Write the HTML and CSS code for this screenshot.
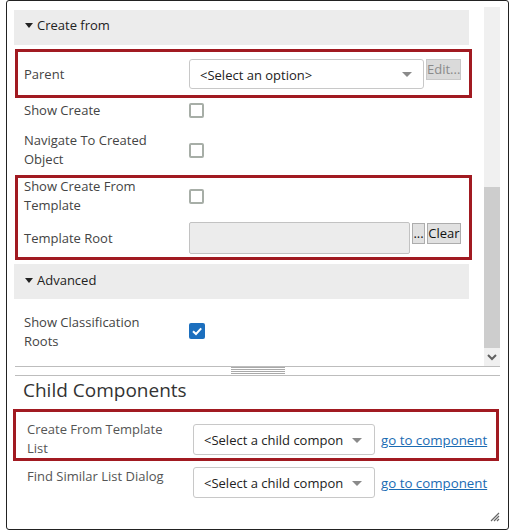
FILE: index.html
```html
<!DOCTYPE html>
<html>
<head>
<meta charset="utf-8">
<link rel="stylesheet" href="styles.css">
</head>
<body>
<div class="frame">
  <div class="upper">
    <div class="pane">
      <div class="band"><span class="caret"></span>Create from</div>
      <div class="row h-parent">
        <div class="label">Parent</div>
        <div class="ctrl">
          <div class="select sel-parent"><span class="seltext">&lt;Select an option&gt;</span><span class="arrow"></span></div>
          <button class="btn btn-edit">Edit...</button>
        </div>
      </div>
      <div class="row h-show">
        <div class="label">Show Create</div>
        <div class="ctrl"><span class="check"></span></div>
      </div>
      <div class="row h-nav">
        <div class="label">Navigate To Created<br>Object</div>
        <div class="ctrl"><span class="check"></span></div>
      </div>
      <div class="row h-tpl">
        <div class="label">Show Create From<br>Template</div>
        <div class="ctrl"><span class="check"></span></div>
      </div>
      <div class="row h-root">
        <div class="label">Template Root</div>
        <div class="ctrl">
          <div class="textbox"></div>
          <button class="btn btn-dots">...</button>
          <button class="btn btn-clear">Clear</button>
        </div>
      </div>
      <div class="band band-adv"><span class="caret"></span>Advanced</div>
      <div class="row h-class">
        <div class="label">Show Classification<br>Roots</div>
        <div class="ctrl"><span class="check checked"><svg viewBox="0 0 16 16" width="16" height="16"><path d="M4 8.2 L7 11 L12.2 5.4" fill="none" stroke="#fff" stroke-width="2"/></svg></span></div>
      </div>
    </div>
    <div class="scrollbar">
      <div class="track"></div>
      <div class="thumb"></div>
      <div class="down"><svg viewBox="0 0 16 18" width="16" height="18"><path d="M4 7 L8 11 L12 7" fill="none" stroke="#606060" stroke-width="2"/></svg></div>
    </div>
  </div>
  <div class="splitter"><div class="grip"></div></div>
  <div class="lower">
    <h2 class="heading">Child Components</h2>
    <div class="crow crow-first">
      <div class="clabel">Create From Template<br>List</div>
      <div class="cctrl">
        <div class="select sel-child"><span class="seltext">&lt;Select a child compon</span><span class="arrow"></span></div>
        <a class="link" href="#">go to component</a>
      </div>
    </div>
    <div class="crow crow-second">
      <div class="clabel">Find Similar List Dialog</div>
      <div class="cctrl cctrl-top">
        <div class="select sel-child"><span class="seltext">&lt;Select a child compon</span><span class="arrow"></span></div>
        <a class="link" href="#">go to component</a>
      </div>
    </div>
  </div>
  <div class="hl hl-1"></div>
  <div class="hl hl-2"></div>
  <div class="hl hl-3"></div>
  <svg class="resize" viewBox="0 0 10 10" width="10" height="10"><path d="M9 1 L1 9 M9 4 L4 9 M9 7 L7 9" stroke="#666" stroke-width="1.2"/></svg>
</div>
</body>
</html>
```
FILE: styles.css
```css
* { box-sizing: border-box; }
html, body { margin: 0; padding: 0; background: #fff; }
body {
  font-family: "Open Sans", "Noto Sans", sans-serif;
  font-size: 13px;
  color: #444;
}
.frame {
  position: relative;
  margin-left: 6px;
  width: 503px;
  height: 530px;
  border: 1px solid #222;
  border-radius: 3px;
  overflow: hidden;
}
.upper {
  display: flex;
  height: 365px;
  overflow: hidden;
}
.pane {
  width: 462px;
  padding-left: 7px;
  padding-top: 9px;
}
.band {
  display: flex;
  align-items: center;
  height: 35px;
  background: #ececec;
  padding-left: 11px;
  padding-bottom: 5px;
  color: #222;
  font-size: 13px;
}
.band-adv { margin-top: 2px; padding-bottom: 4px; }
.caret {
  width: 0;
  height: 0;
  border-left: 4px solid transparent;
  border-right: 4px solid transparent;
  border-top: 5px solid #222;
  margin-right: 4px;
  margin-top: 1px;
}
.row {
  display: flex;
  align-items: center;
  padding-left: 10px;
}
.h-parent { height: 54px; padding-top: 4px; }
.h-show { height: 22px; }
.h-nav { height: 55px; padding-top: 2px; }
.h-tpl { height: 38px; padding-top: 2px; }
.h-root { height: 48px; }
.h-class { height: 64px; padding-top: 2px; }
.label {
  width: 165px;
  flex: none;
  line-height: 19px;
  color: #444;
}
.ctrl {
  display: flex;
  align-items: flex-start;
}
.select {
  position: relative;
  display: flex;
  align-items: center;
  border: 1px solid #c8c8c8;
  border-radius: 3px;
  background: #fff;
  color: #222;
  overflow: hidden;
  white-space: nowrap;
}
.sel-parent {
  width: 235px;
  height: 30px;
  padding-left: 10px;
  padding-top: 2px;
}
.sel-child {
  width: 182px;
  height: 31px;
  padding-left: 10px;
  padding-top: 1px;
}
.arrow {
  position: absolute;
  right: 11px;
  top: 50%;
  margin-top: -2px;
  width: 0;
  height: 0;
  border-left: 5px solid transparent;
  border-right: 5px solid transparent;
  border-top: 5px solid #8a8a8a;
}
.sel-child .arrow { right: 12px; }
.btn {
  font-family: "Open Sans", "Noto Sans", sans-serif;
  font-size: 13px;
  height: 21px;
  padding: 0;
  margin-left: 2px;
  border-radius: 0;
  line-height: 19px;
  text-align: center;
}
.btn-edit {
  width: 35px;
  background: #dadada;
  border: 1px solid #c8c8c8;
  color: #8a8a8a;
}
.btn-dots {
  width: 13px;
  margin-top: 1px;
  background: #e1e1e1;
  border: 1px solid #adadad;
  color: #111;
}
.btn-clear {
  width: 34px;
  margin-top: 1px;
  background: #e1e1e1;
  border: 1px solid #adadad;
  color: #111;
}
.textbox {
  width: 221px;
  height: 32px;
  background: #ececec;
  border: 1px solid #c2c2c2;
  border-radius: 2px;
}
.check {
  display: block;
  width: 15px;
  height: 15px;
  border: 2px solid #a7aea7;
  border-radius: 2px;
  margin-top: 1px;
}
.check.checked {
  width: 16px;
  height: 16px;
  border: none;
  background: #1c6fbe;
  margin-top: -2px;
}
.check svg { display: block; }
.scrollbar {
  display: flex;
  flex-direction: column;
  width: 16px;
  margin-left: 15px;
  margin-top: 6px;
  background: #f0f0f0;
}
.track { flex: 1; }
.thumb { height: 161px; background: #cdcdcd; }
.down { height: 18px; }
.down svg { display: block; }
.splitter {
  display: flex;
  justify-content: center;
  width: 485px;
  margin-left: 8px;
  height: 10px;
  border-top: 1px solid #bdbdbd;
  border-bottom: 1px solid #bdbdbd;
}
.grip {
  width: 54px;
  height: 7px;
  background: repeating-linear-gradient(to bottom, #a9a9a9 0, #a9a9a9 1px, #fff 1px, #fff 2px);
}
.lower {
  padding-left: 16px;
}
.heading {
  margin: 2px 0 0 0;
  font-size: 19px;
  font-weight: normal;
  line-height: 24px;
  color: #333;
}
.crow {
  display: flex;
  align-items: flex-start;
  padding-left: 4px;
}
.crow-first { margin-top: 18px; }
.crow-second { margin-top: 9px; }
.clabel {
  width: 166px;
  flex: none;
  line-height: 19px;
  color: #555;
}
.cctrl {
  display: flex;
  align-items: center;
  margin-top: 4px;
}
.cctrl-top { margin-top: 0; }
.link {
  margin-left: 6px;
  color: #1a6bb3;
  font-size: 13.3px;
  text-decoration: underline;
}
.hl {
  position: absolute;
  border: 3px solid #a11a21;
}
.hl-1 { left: 8px; top: 48px; width: 457px; height: 49px; }
.hl-2 { left: 8px; top: 174px; width: 457px; height: 85px; }
.hl-3 { left: 6px; top: 408px; width: 486px; height: 52px; }
.resize {
  position: absolute;
  right: 8px;
  bottom: 7px;
}
```
